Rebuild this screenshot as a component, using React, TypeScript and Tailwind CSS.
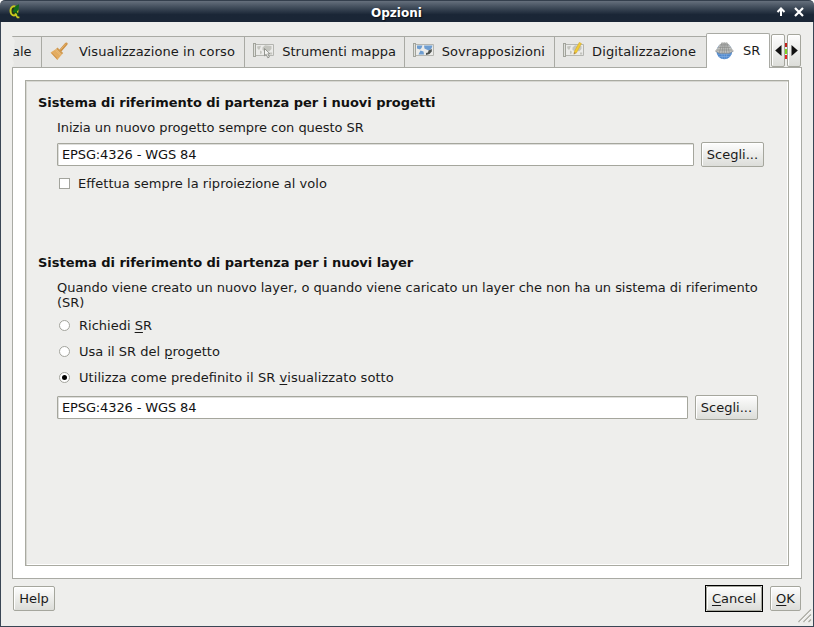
import type { ReactNode } from "react";

const svgBase = "shrink-0 block";

function QgisLogo() {
  return (
    <svg className={svgBase} width="12" height="15" viewBox="0 0 12 15">
      <ellipse cx="5" cy="6.8" rx="3.5" ry="4.6" fill="#26331c" stroke="#c9c91c" strokeWidth="2" />
      <path d="M3.5 8 L6 2.5 L10 .3 L9.6 5.5 L7 8.8Z" fill="#0f6a1a" />
      <path d="M6 9.5 L8.5 13.4H10.4" fill="none" stroke="#c8c820" strokeWidth="1.8" />
      <path d="M7 8L9.5 11" stroke="#0a5414" strokeWidth="1.3" />
    </svg>
  );
}

function BroomIcon() {
  return (
    <svg className={`${svgBase} mb-px`} width="18" height="19" viewBox="0 0 18 19">
      <path d="M10.8 8.2 L16.2 1.9" stroke="#cd9145" strokeWidth="2.8" strokeLinecap="round" />
      <path d="M10.8 7.4 L15.8 1.7" stroke="#e8b46c" strokeWidth="1" strokeLinecap="round" />
      <path d="M7.4 5.4 L13.2 11 L11.9 12.6 L6 7Z" fill="#d19a50" />
      <path d="M6 7 L11.9 12.6 L7.3 18 L.7 10.6Z" fill="#e3ac61" />
      <path d="M2.2 11.2L6.9 16M1.2 10.8L7.3 17.4" stroke="#cd8f45" strokeWidth=".6" />
      <path d="M5.5 8.2L10.6 13.2" stroke="#efc17e" strokeWidth=".8" />
    </svg>
  );
}

function MapIcon({ kind }: { kind: "tools" | "overlay" | "edit" }) {
  return (
    <svg className={`${svgBase} mb-[4px]`} width="22" height="18" viewBox="0 0 22 18">
      <path d="M2.5 3.5H20.5V14.5H2.5" fill="#ebebe9" stroke="#b4b5b0" />
      <rect x=".5" y="2.5" width="2" height="13" fill="#dfe0dc" stroke="#a2a49c" />
      {kind === "overlay" ? (
        <>
          <path d="M4 4.5H9.5L8.5 7L7 8.5L4 7.5ZM5.5 13.5L7.5 9.5L10.5 10.5L11 13.5ZM11 4.5H19.5L18.5 7.5L16 9.5L13.5 8.5L11.5 7.5Z" fill="#6d9dd1" />
          <path d="M18.8 8V10.5L16.5 13L13 14V12L15 11.5L15.5 9.5Z" fill="#4d514e" />
        </>
      ) : (
        <path d="M4 5.5L8 4.8L7 7.5L6 9L4.5 7.5ZM7 9.5L9 10.7L8 13.5L7 12.5ZM9.5 6.5L12 4.2L18.5 5V8L16 10.5L14.5 9.5L13 13L11.5 10L9.5 9ZM17 11.5H19.2V13.5H17Z" fill="#c3c4be" />
      )}
      {kind === "tools" && (
        <path d="M11.5 7.5V14.8L13.2 13.3L14.8 16.8L16.4 16L14.8 12.8H17Z" fill="#f4f4f2" stroke="#888a84" strokeWidth=".9" />
      )}
      {kind === "edit" && (
        <>
          <path d="M11.5 10.3L16.3 1.4L18.4 2.5L13.6 11.6L11 13.1Z" fill="#f2cc35" stroke="#d6a928" strokeWidth=".6" />
          <path d="M10.6 13.6L11.3 11L12.9 12.1Z" fill="#a8824a" />
        </>
      )}
    </svg>
  );
}

function GlobeIcon() {
  return (
    <svg className={`${svgBase} mb-px`} width="20" height="19" viewBox="0 0 20 19">
      <circle cx="9.3" cy="10.3" r="7.9" fill="#4f88cd" />
      <path d="M2 13.2H17M3.5 15.5H15M6.5 11L7.5 18M12.2 11L11 18M9.3 11V18" stroke="#84afe0" strokeWidth=".6" fill="none" />
      <path d="M.2 10L4.4 4L7 1.4H11.8L14.4 4L18.6 10L14.5 12.3H4.2Z" fill="#bfc0be" />
      <path d="M.2 10L4.2 12.3H14.5L18.6 10M3.2 6.4H15.6M4.6 3.9H14.2M1.6 9H17.2M7 1.4L4.2 12.3M9.3 1.4V12.3M11.8 1.4L14.5 12.3M7 12.3L8.2 2M11.8 12.3L10.6 2" stroke="#858784" strokeWidth=".6" fill="none" />
    </svg>
  );
}

function Tab({ className, icon, children }: { className: string; icon: ReactNode; children: ReactNode }) {
  return (
    <div className={`${className} flex h-[32px] shrink-0 items-center border-y border-[#a9aaa4] bg-[#e7e7e5] pl-[8px]`}>
      {icon}
      <span className="-mt-px ml-auto">{children}</span>
    </div>
  );
}

const buttonLook =
  "flex shrink-0 items-center justify-center rounded-[2px] border border-[#a5a69d] bg-gradient-to-b from-[#fdfdfd] to-[#dcddd9] shadow-[inset_1px_1px_0_#fff]";

function Choose() {
  return <button className={`${buttonLook} h-[25px] w-[63px]`}>Scegli...</button>;
}

function Field({ width }: { width: string }) {
  return (
    <input
      className={`${width} h-[23px] shrink-0 rounded-[1px] border border-[#a5a69d] bg-white px-1 tracking-[-0.13px] text-[#111] shadow-[inset_1px_1px_0_#dededb] outline-none`}
      defaultValue="EPSG:4326 - WGS 84"
    />
  );
}

function Radio({ checked, className, children }: { checked?: boolean; className?: string; children: ReactNode }) {
  return (
    <label className={`${className ?? ""} flex h-[26px] items-center pl-[2px]`}>
      <span className="flex size-[11px] items-center justify-center rounded-full border border-[#a3a49d] bg-white">
        {checked && <span className="size-[5px] rounded-full bg-black" />}
      </span>
      <span className="ml-[9px]">{children}</span>
    </label>
  );
}

function Key({ children }: { children: string }) {
  return <span className="underline decoration-1 underline-offset-2">{children}</span>;
}

function ScrollButton({ dir }: { dir: "left" | "right" }) {
  return (
    <button className={`${buttonLook} h-[33px] w-[14px]`}>
      <svg className="mb-px shrink-0" width="7" height="11" viewBox="0 0 7 11">
        <path d={dir === "left" ? "M6.5 0V11L.2 5.5Z" : "M.5 0V11L6.8 5.5Z"} fill="#111" />
      </svg>
    </button>
  );
}

export default function App() {
  return (
    <div className="flex h-[627px] w-[814px] flex-col overflow-hidden bg-white font-['DejaVu_Sans',sans-serif] text-[13px] leading-[15px] whitespace-nowrap text-[#1a1a1a] [font-feature-settings:'liga'_1]">
      <header className="flex h-[22px] shrink-0 items-center rounded-t-[5px] border-t border-[#343f4d] bg-gradient-to-b from-[#66707d] via-[#303c4b] via-45% to-[#1a2636] to-65% pl-[9px] text-white">
        <QgisLogo />
        <span className="ml-[350px] pt-[3px] text-[12px] font-bold [text-shadow:1px_1px_1px_#0008]">Opzioni</span>
        <svg className="mt-[1px] mr-[9px] ml-auto" width="30" height="12" viewBox="0 0 30 12">
          <path d="M6 10V3M2.5 6L6 2.5L9.5 6" fill="none" stroke="#fff" strokeWidth="2" />
          <path d="M20 2L28 10M28 2L20 10" stroke="#fff" strokeWidth="2.2" />
        </svg>
      </header>

      <main className="flex min-h-0 flex-1 flex-col border-x border-b border-[#3a4655] bg-[#eeeeec]">
        <nav className="mt-[11px] ml-[11px] flex h-[35px] w-[790px] shrink-0 items-end">
          <div className="flex h-[32px] w-[30px] shrink-0 items-center border-y border-r border-[#a9aaa4] bg-[#e7e7e5] [clip-path:polygon(0_0,3px_5px,2px_10px,3px_15px,0_22px,2px_27px,0_100%,100%_100%,100%_0)]">
            <span className="-mt-px">ale</span>
          </div>
          <Tab className="w-[203px] border-r pr-[9px] tracking-[0.09px]" icon={<BroomIcon />}>Visualizzazione in corso</Tab>
          <Tab className="w-[160px] border-r pr-[8px]" icon={<MapIcon kind="tools" />}>Strumenti mappa</Tab>
          <Tab className="w-[150px] border-r pr-[9px] tracking-[0.07px]" icon={<MapIcon kind="overlay" />}>Sovrapposizioni</Tab>
          <Tab className="w-[151px] pr-[10px] tracking-[0.12px]" icon={<MapIcon kind="edit" />}>Digitalizzazione</Tab>
          <div className="z-10 flex h-[35px] w-[64px] shrink-0 items-center rounded-t-[2px] border-x border-t border-[#a9aaa4] bg-white pl-[8px]">
            <GlobeIcon />
            <span className="-mt-px ml-[8px]">SR</span>
          </div>
          <div className="ml-px flex h-[34px] shrink-0 items-start">
            <ScrollButton dir="left" />
            <div className="mt-[9px] flex h-[16px] w-[2px] flex-col justify-between bg-[#eeeeec]">
              <i className="h-[4px] bg-[#c22019]" />
              <i className="h-[5px] bg-[#7ed321]" />
              <i className="h-[4px] bg-[#e52525]" />
            </div>
            <ScrollButton dir="right" />
          </div>
        </nav>

        <section className="-mt-px ml-[11px] h-[512px] w-[790px] shrink-0 border border-[#a9aaa4] bg-white p-[12px]">
          <div className="flex h-[486px] w-[764px] flex-col border border-[#a9aaa1] bg-[#eeeeec] pt-[14px] pl-[12px] shadow-[inset_1px_1px_0_#d7d7d2,inset_-1px_-1px_0_#fff]">
            <h2 className="h-[25px] font-bold tracking-[-0.04px] text-[#111]">Sistema di riferimento di partenza per i nuovi progetti</h2>
            <div className="pl-[19px]">
              <p className="h-[22px] tracking-[-0.05px]">Inizia un nuovo progetto sempre con questo SR</p>
              <div className="flex items-center gap-[7px]">
                <Field width="w-[637px]" />
                <Choose />
              </div>
              <label className="mt-[8px] flex h-[17px] items-center pl-[2px]">
                <span className="size-[11px] border border-[#a3a49d] bg-white" />
                <span className="ml-[8px] tracking-[0.03px]">Effettua sempre la riproiezione al volo</span>
              </label>
            </div>
            <h2 className="mt-[63px] h-[25px] font-bold tracking-[-0.03px] text-[#111]">Sistema di riferimento di partenza per i nuovi layer</h2>
            <div className="pl-[19px]">
              <p className="mb-[2px] tracking-[-0.038px]">
                Quando viene creato un nuovo layer, o quando viene caricato un layer che non ha un sistema di riferimento
                <br />
                (SR)
              </p>
              <Radio>Richiedi <Key>S</Key>R</Radio>
              <Radio>Usa il SR del <Key>p</Key>rogetto</Radio>
              <Radio checked className="tracking-[0.06px]">Utilizza come predefinito il SR <Key>v</Key>isualizzato sotto</Radio>
              <div className="mt-[5px] flex items-center gap-[7px]">
                <Field width="w-[631px]" />
                <Choose />
              </div>
            </div>
          </div>
        </section>

        <footer className="mt-[6px] flex h-[42px] shrink-0 items-start pl-[12px]">
          <button className={`${buttonLook} mt-px h-[25px] w-[42px]`}>Help</button>
          <div className="ml-auto flex h-[27px] w-[58px] border border-black">
            <button className={`${buttonLook} h-[25px] w-[56px]`}><Key>C</Key>ancel</button>
          </div>
          <button className={`${buttonLook} mt-px ml-[7px] h-[25px] w-[31px]`}><Key>O</Key>K</button>
          <svg className="-ml-[4px] mr-px mb-[4px] shrink-0 self-end" width="15" height="15" viewBox="0 0 15 15">
            <path d="M1.5 14L14 1.5M6.5 14L14 6.5M11.5 14L14 11.5" stroke="#a5a69d" strokeWidth="1.2" />
            <path d="M2.8 14L14 2.8M7.8 14L14 7.8" stroke="#fff" strokeWidth=".8" />
          </svg>
        </footer>
      </main>
    </div>
  );
}
